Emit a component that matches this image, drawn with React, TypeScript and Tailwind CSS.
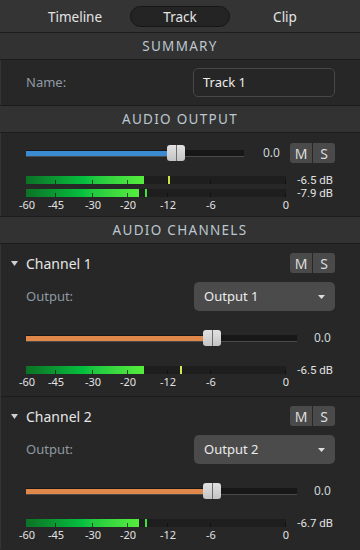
import { useState } from "react";

const font = { fontFamily: '"Noto Sans", "Open Sans", sans-serif' };

// scale positions relative to meter left edge (meter is 260px wide)
const scale = [
  { label: "-60", x: 1 },
  { label: "-45", x: 30 },
  { label: "-30", x: 67 },
  { label: "-20", x: 102 },
  { label: "-12", x: 142 },
  { label: "-6", x: 185 },
  { label: "0", x: 260 },
];
const ticks = [29, 66, 101, 141, 184, 259];

function SectionHeader({ title }: { title: string }) {
  return (
    <div className="h-[28px] flex items-center justify-center bg-[#323232] border-y border-[#1c1c1c] text-[13.5px] tracking-[1.3px] text-[#bcc7cf]">
      {title}
    </div>
  );
}

function MuteSolo() {
  return (
    <div className="flex gap-px">
      <div className="w-[22px] h-[20px] flex items-center justify-center bg-[#4a4a4a] rounded-l-[3px] text-[14px] text-[#dedede]">M</div>
      <div className="w-[22px] h-[20px] flex items-center justify-center bg-[#4a4a4a] rounded-r-[3px] text-[14px] text-[#dedede]">S</div>
    </div>
  );
}

function Slider({ width, pos, color }: { width: number; pos: number; color: string }) {
  return (
    <div className="relative h-[18px] flex items-center" style={{ width }}>
      <div className="w-full h-[7px] bg-[#171717] border-b border-[#4a4a4a] relative">
        <div className="absolute left-0 top-[1px] h-[5px]" style={{ width: pos, background: color }} />
      </div>
      <div
        className="absolute top-[1px] h-[16px] w-[18px] rounded-[3px] bg-gradient-to-b from-[#e2e2e2] to-[#c4c4c4] flex justify-center"
        style={{ left: pos - 9 }}
      >
        <div className="w-px h-full bg-[#6a6a6a]" />
      </div>
    </div>
  );
}

function MeterBar({ fill, peak, peakColor }: { fill: number; peak: number; peakColor: string }) {
  return (
    <div className="relative w-[260px] h-[8px] bg-[#1e1e1e]">
      <div
        className="absolute left-0 top-0 h-full bg-gradient-to-r from-[#0b7226] via-[#04c13f] to-[#55ee3d]"
        style={{ width: fill }}
      />
      {ticks.map((t) => (
        <div key={t} className="absolute bottom-0 w-px h-[4px] bg-[#0c0c0c]/70" style={{ left: t }} />
      ))}
      <div className="absolute top-0 h-full w-[2px]" style={{ left: peak, background: peakColor }} />
    </div>
  );
}

function Scale() {
  return (
    <div className="relative w-[260px] h-[12px] text-[11px] leading-[12px] text-[#e2e2e2]">
      {scale.map((s) => (
        <span key={s.label} className="absolute top-0 -translate-x-1/2" style={{ left: s.x }}>
          {s.label}
        </span>
      ))}
    </div>
  );
}

function DbLabel({ text }: { text: string }) {
  return (
    <span
      className="ml-auto mr-[27px] -my-[2px] text-[11.5px] leading-[12px] text-[#e2e2e2]"
      style={{ fontFamily: 'Roboto, "Noto Sans", sans-serif' }}
    >
      {text}
    </span>
  );
}

function Channel({ name, output, fill, peak, peakColor, db, last }: {
  name: string; output: string; fill: number; peak: number; peakColor: string; db: string; last?: boolean;
}) {
  return (
    <div className={`pt-[9px] pb-[8px] ${last ? "" : "border-b border-[#1c1c1c]"}`}>
      <div className="flex items-center h-[20px] pl-[10px] pr-[25px]">
        <svg width="7" height="5" viewBox="0 0 7 5" className="mr-[8px]">
          <path d="M0 0 L7 0 L3.5 5 Z" fill="#cfcfcf" />
        </svg>
        <span className="text-[14px] text-[#e6e6e6] flex-1">{name}</span>
        <MuteSolo />
      </div>
      <div className="flex items-center mt-[9px] pl-[25px] pr-[25px]">
        <span className="text-[13px] text-[#8e9aa3] flex-1">Output:</span>
        <div className="w-[141px] h-[29px] bg-[#4b4b4b] rounded-[5px] flex items-center pl-[10px] pr-[10px]">
          <span className="text-[13px] text-[#ececec] flex-1">{output}</span>
          <svg width="7" height="4" viewBox="0 0 7 4">
            <path d="M0 0 L7 0 L3.5 4 Z" fill="#dcdcdc" />
          </svg>
        </div>
      </div>
      <div className="flex items-center mt-[18px] pl-[25px]">
        <Slider width={271} pos={186} color="#e0874a" />
        <span className="ml-[17px] text-[12px] text-[#cdd6dd]">0.0</span>
      </div>
      <div className="flex items-center h-[8px] mt-[19px] pl-[25px]">
        <MeterBar fill={fill} peak={peak} peakColor={peakColor} />
        <DbLabel text={db} />
      </div>
      <div className="mt-[2px] pl-[25px]">
        <Scale />
      </div>
    </div>
  );
}

export default function App() {
  const [tab, setTab] = useState("Track");
  const tabs = ["Timeline", "Track", "Clip"];

  return (
    <div className="w-[360px] h-[550px] overflow-hidden bg-[#272727]" style={font}>
      {/* Tabs */}
      <div className="h-[32px] bg-[#343434] flex items-center justify-center gap-[5px]">
        {tabs.map((t) => (
          <button
            key={t}
            onClick={() => setTab(t)}
            className={`w-[100px] h-[21px] rounded-full text-[13.5px] text-[#e4e4e4] ${
              tab === t ? "bg-[#242424] border border-[#161616]" : "border border-transparent"
            }`}
          >
            {t}
          </button>
        ))}
      </div>

      <SectionHeader title="SUMMARY" />
      <div className="h-[45px] flex items-center px-[25px] border-l border-[#343434]">
        <span className="text-[13px] text-[#8e9aa3] flex-1">Name:</span>
        <div className="w-[142px] h-[29px] rounded-[5px] border border-[#474747] bg-[#262626] flex items-center pl-[9px] text-[13px] text-[#ececec]">
          Track 1
        </div>
      </div>

      <SectionHeader title="AUDIO OUTPUT" />
      <div className="h-[83px] pt-[10px] border-l border-[#343434]">
        <div className="flex items-center pl-[25px]">
          <Slider width={218} pos={150} color="#3b8bd3" />
          <span className="ml-[19px] text-[12px] text-[#cdd6dd]">0.0</span>
          <div className="ml-auto mr-[25px]">
            <MuteSolo />
          </div>
        </div>
        <div className="flex items-center h-[8px] mt-[13px] pl-[25px]">
          <MeterBar fill={118} peak={142} peakColor="#c9e545" />
          <DbLabel text="-6.5 dB" />
        </div>
        <div className="flex items-center h-[8px] mt-[5px] pl-[25px]">
          <MeterBar fill={113} peak={119} peakColor="#3fe23a" />
          <DbLabel text="-7.9 dB" />
        </div>
        <div className="mt-[2px] pl-[25px]">
          <Scale />
        </div>
      </div>

      <SectionHeader title="AUDIO CHANNELS" />
      <div className="border-l border-[#343434]">
        <Channel name="Channel 1" output="Output 1" fill={118} peak={154} peakColor="#d2e84f" db="-6.5 dB" />
        <Channel name="Channel 2" output="Output 2" fill={113} peak={119} peakColor="#3fe23a" db="-6.7 dB" last />
      </div>
    </div>
  );
}
